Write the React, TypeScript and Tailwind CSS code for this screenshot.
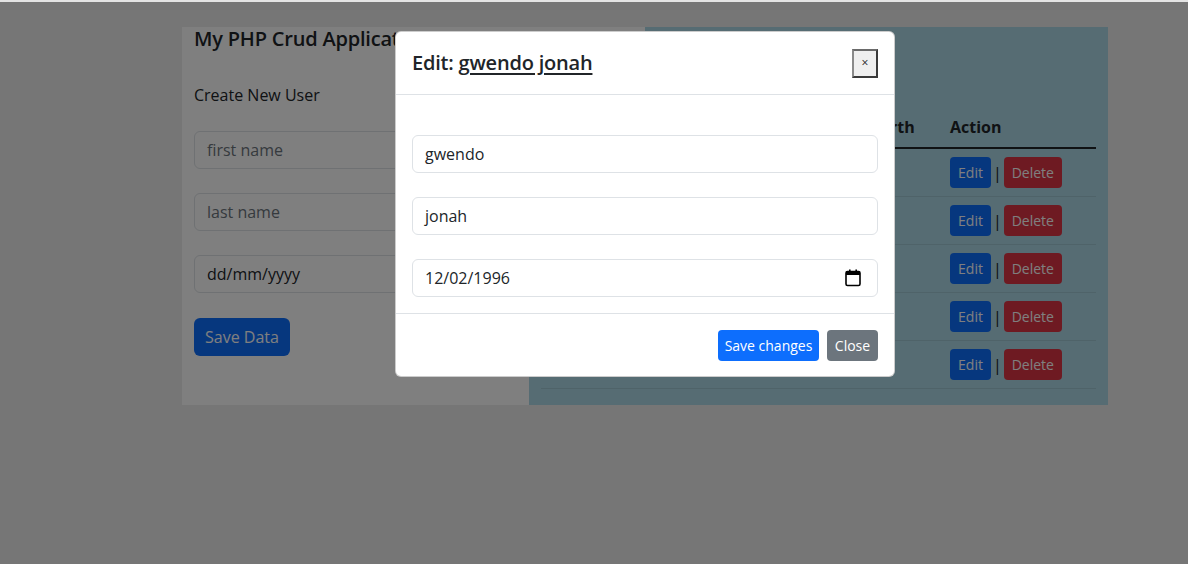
import React from "react";

const FONT = { fontFamily: "'Open Sans', 'Noto Sans', 'Liberation Sans', sans-serif" };

const rows = [
  { id: 1, first: "gwendo", last: "jonah", dob: "1996-02-12" },
  { id: 2, first: "mary", last: "wanjiku", dob: "1994-05-21" },
  { id: 3, first: "peter", last: "otieno", dob: "1990-11-03" },
  { id: 4, first: "james", last: "kamau", dob: "1998-07-15" },
  { id: 5, first: "grace", last: "achieng", dob: "2000-01-30" },
];

function CalendarIcon() {
  return (
    <svg width="16" height="18" viewBox="0 0 16 18" fill="none">
      <rect x="1" y="2.5" width="14" height="14" rx="1.5" stroke="#000" strokeWidth="1.6" />
      <rect x="1" y="2.5" width="14" height="3.5" fill="#000" />
      <rect x="4" y="0.5" width="1.6" height="3" fill="#000" />
      <rect x="10.4" y="0.5" width="1.6" height="3" fill="#000" />
    </svg>
  );
}

export default function App() {
  return (
    <div className="relative h-[564px] w-[1188px] overflow-hidden bg-[#ececec]" style={FONT}>
      <div className="h-[2px] bg-[#e4e4e4]" />
      <div className="relative isolate z-0 pt-[25px] pl-[182px]">
        <div className="flex w-[926px] text-[#212529]">
          {/* Left column */}
          <div className="w-[347px] bg-white px-3">
            <div className="relative z-10 -mx-3 h-[40px] w-[463px] bg-white px-3 text-[20px] font-semibold leading-[24px] tracking-[-0.2px]">
              My PHP Crud Application
            </div>
            <div className="mt-[16px] text-[16px] leading-[24px]">Create New User</div>
            <div className="mt-[24px] flex flex-col gap-[24px]">
              <div className="flex h-[38px] items-center rounded-[6px] border border-[#dee2e6] bg-white px-3 text-[16px] text-[#6c757d]">
                first name
              </div>
              <div className="flex h-[38px] items-center rounded-[6px] border border-[#dee2e6] bg-white px-3 text-[16px] text-[#6c757d]">
                last name
              </div>
              <div className="flex h-[38px] items-center rounded-[6px] border border-[#dee2e6] bg-white px-3 text-[16px] text-[#212529]">
                dd/mm/yyyy
              </div>
            </div>
            <div className="mt-[25px] flex h-[38px] w-[96px] items-center justify-center rounded-[6px] bg-[#0d6efd] text-[16px] text-white">
              Save Data
            </div>
          </div>

          {/* Right column */}
          <div className="flex-1 bg-[#add8e6] px-3 pb-[16px]">
            <div className="h-[80px]" />
            <div className="grid grid-cols-[40px_1fr_1fr_138px_154px] border-b-2 border-[#212529] text-[16px] font-bold leading-[24px]">
              <div className="p-2">#</div>
              <div className="p-2">First Name</div>
              <div className="p-2">Last Name</div>
              <div className="p-2">Date of Birth</div>
              <div className="p-2">Action</div>
            </div>
            {rows.map((r) => (
              <div
                key={r.id}
                className="grid h-[48px] grid-cols-[40px_1fr_1fr_138px_154px] items-center border-b border-[#9fc6d3] text-[16px]"
              >
                <div className="px-2">{r.id}</div>
                <div className="px-2">{r.first}</div>
                <div className="px-2">{r.last}</div>
                <div className="px-2">{r.dob}</div>
                <div className="flex items-center px-2">
                  <div className="flex h-[31px] w-[41px] items-center justify-center rounded-[4px] bg-[#0d6efd] text-[14px] text-white">
                    Edit
                  </div>
                  <span className="mx-[2px] text-[16px]">|</span>
                  <div className="flex h-[31px] w-[58px] items-center justify-center rounded-[4px] bg-[#dc3545] text-[14px] text-white">
                    Delete
                  </div>
                </div>
              </div>
            ))}
          </div>
        </div>
      </div>

      {/* Backdrop */}
      <div className="absolute inset-x-0 bottom-0 top-[2px] bg-black/50" />

      {/* Modal */}
      <div className="absolute left-[395px] top-[31px] w-[500px] rounded-[6px] border border-black/20 bg-white text-[#212529]">
        <div className="flex h-[63px] items-center justify-between border-b border-[#dee2e6] px-4">
          <div className="text-[20px] font-semibold leading-[30px] tracking-[-0.2px]">
            Edit: <span className="underline underline-offset-[3px]">gwendo jonah</span>
          </div>
          <div className="flex h-[29px] w-[26px] items-center justify-center border-2 border-[#3a3a3a] border-l-[#8a8a8a] border-t-[#6a6a6a] bg-[#efefef] text-[12px] leading-none text-[#222]">
            ×
          </div>
        </div>
        <div className="flex flex-col gap-[24px] px-4 pb-[16px] pt-[40px]">
          <div className="flex h-[38px] items-center rounded-[6px] border border-[#dee2e6] px-3 text-[16px]">gwendo</div>
          <div className="flex h-[38px] items-center rounded-[6px] border border-[#dee2e6] px-3 text-[16px]">jonah</div>
          <div className="flex h-[38px] items-center justify-between rounded-[6px] border border-[#dee2e6] pl-3 pr-[16px] text-[16px]">
            <span>12/02/1996</span>
            <CalendarIcon />
          </div>
        </div>
        <div className="flex justify-end gap-[8px] border-t border-[#dee2e6] px-4 pb-[15px] pt-[16px]">
          <div className="flex h-[31px] w-[101px] items-center justify-center rounded-[4px] bg-[#0d6efd] text-[14px] text-white">
            Save changes
          </div>
          <div className="flex h-[31px] w-[51px] items-center justify-center rounded-[4px] bg-[#6c757d] text-[14px] text-white">
            Close
          </div>
        </div>
      </div>
    </div>
  );
}
